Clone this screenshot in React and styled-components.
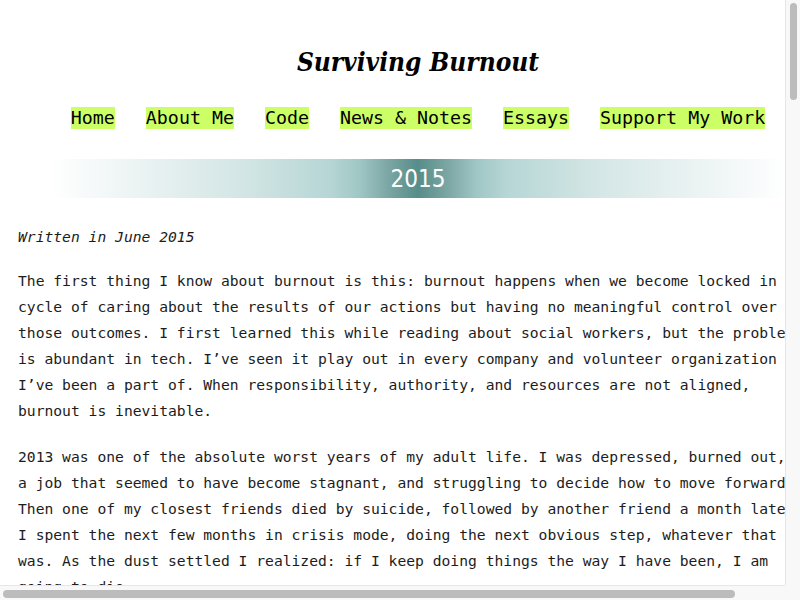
import React from "react";
import styled, { createGlobalStyle } from "styled-components";

const GlobalStyle = createGlobalStyle`
  html, body {
    margin: 0;
    padding: 0;
    overflow: hidden;
  }
  body {
    background: #fff;
    color: #1c1c1c;
    font-family: "DejaVu Sans Mono", monospace;
    font-size: 14.67px;
  }
`;

// window frame: page area plus the two scrollbars seen in the screenshot
const Frame = styled.div`
  width: 800px;
  height: 600px;
  display: grid;
  grid-template-columns: 785px 15px;
  grid-template-rows: 585px 15px;
`;

const Scroller = styled.div`
  overflow: hidden;
`;

const Track = styled.div`
  background: #f8f8f8;
  display: flex;
  padding: ${(p) => (p.$vertical ? "3px 3px 0 4px" : "4px 0 3px 3px")};
  border-${(p) => (p.$vertical ? "left" : "top")}: 1px solid #e6e6e6;
  box-sizing: border-box;
`;

const Thumb = styled.div`
  background: #bcbcbc;
  border-radius: 5px;
  width: ${(p) => (p.$vertical ? "8px" : p.$size)};
  height: ${(p) => (p.$vertical ? p.$size : "8px")};
`;

const Corner = styled.div`
  background: #f8f8f8;
`;

const Page = styled.div`
  width: 836px;
`;

const Header = styled.header`
  display: flex;
  flex-direction: column;
  align-items: center;
  padding-top: 45px;
`;

const Title = styled.h1`
  margin: 0;
  font-family: "DejaVu Serif", serif;
  font-stretch: condensed;
  font-style: italic;
  font-weight: 700;
  font-size: 26px;
  line-height: 34px;
  color: #000;
`;

const Nav = styled.nav`
  display: flex;
  justify-content: center;
  gap: 31px;
  margin-top: 28px;
`;

const NavLink = styled.a`
  background: #ccff66;
  color: #000;
  text-decoration: none;
  font-size: 18.3px;
  line-height: 22px;
`;

const Banner = styled.div`
  margin: 30px 50px 0;
  height: 39px;
  display: flex;
  align-items: center;
  justify-content: center;
  background: linear-gradient(
    to right,
    #ffffff 0%,
    #e8f1f1 14%,
    #d3e6e5 26%,
    #b6d6d5 38%,
    #a0c7c5 42%,
    #7ba6a3 46%,
    #578d89 50%,
    #7ba6a3 54%,
    #a0c7c5 58%,
    #b6d6d5 62%,
    #d3e6e5 74%,
    #e8f1f1 86%,
    #ffffff 100%
  );
  color: #fff;
  font-family: "DejaVu Sans", sans-serif;
  font-stretch: condensed;
  font-size: 24px;
`;

const Content = styled.main`
  padding: 26px 18px 0;
`;

const Dateline = styled.p`
  margin: 0 0 18px;
  font-style: italic;
  line-height: 26px;
`;

const Para = styled.p`
  margin: 0 0 20px;
  line-height: 26px;
`;

const links = ["Home", "About Me", "Code", "News & Notes", "Essays", "Support My Work"];

const App = () => (
  <>
    <GlobalStyle />
    <Frame>
      <Scroller>
        <Page>
          <Header>
            <Title>Surviving Burnout</Title>
            <Nav>
              {links.map((l) => (
                <NavLink key={l} href="#">
                  {l}
                </NavLink>
              ))}
            </Nav>
          </Header>
          <Banner>2015</Banner>
          <Content>
            <Dateline>Written in June 2015</Dateline>
            <Para>
              The first thing I know about burnout is this: burnout happens when we become locked in a
              cycle of caring about the results of our actions but having no meaningful control over
              those outcomes. I first learned this while reading about social workers, but the problem
              is abundant in tech. I’ve seen it play out in every company and volunteer organization
              I’ve been a part of. When responsibility, authority, and resources are not aligned,
              burnout is inevitable.
            </Para>
            <Para>
              2013 was one of the absolute worst years of my adult life. I was depressed, burned out, in
              a job that seemed to have become stagnant, and struggling to decide how to move forward.
              Then one of my closest friends died by suicide, followed by another friend a month later.
              I spent the next few months in crisis mode, doing the next obvious step, whatever that
              was. As the dust settled I realized: if I keep doing things the way I have been, I am
              going to die.
            </Para>
            <Para>
              So I started making changes. I left the job, took time off, and began to figure out what
              had gone wrong and how to keep it from happening again.
            </Para>
          </Content>
        </Page>
      </Scroller>
      <Track $vertical>
        <Thumb $vertical $size="97px" />
      </Track>
      <Track>
        <Thumb $size="732px" />
      </Track>
      <Corner />
    </Frame>
  </>
);

export default App;
